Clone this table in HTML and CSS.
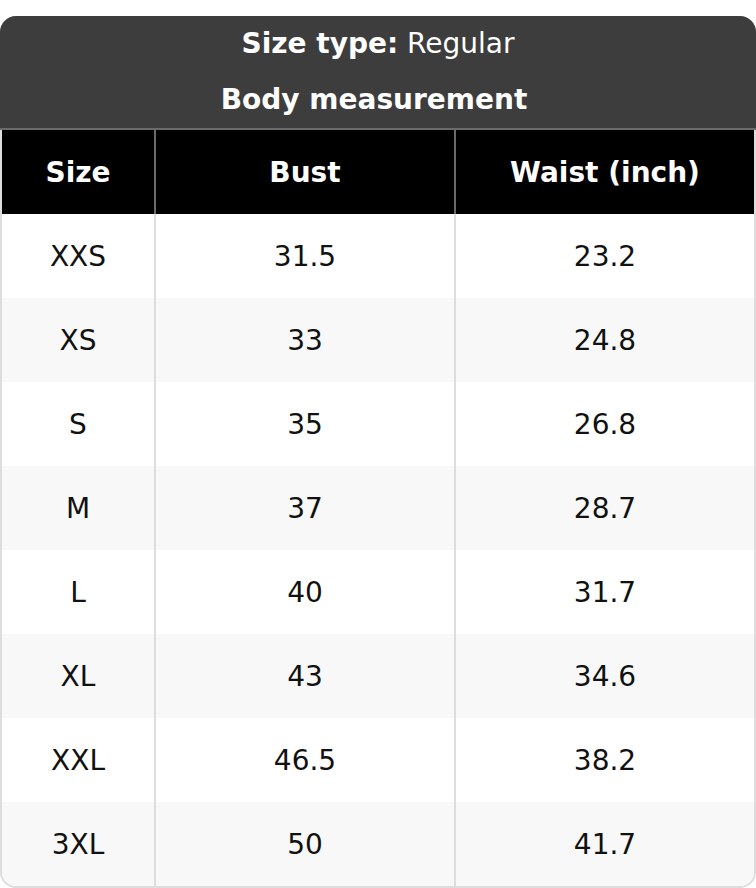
FILE: index.html
```html
<!DOCTYPE html>
<html>
<head>
<meta charset="utf-8">
<link rel="stylesheet" href="styles.css">
</head>
<body>
<div class="chart">
  <div class="head">
    <div class="head-line"><b>Size type:</b> Regular</div>
    <div class="head-line head-sub"><b>Body measurement</b></div>
  </div>
  <table class="grid">
    <thead>
      <tr><th class="c1">Size</th><th class="c2">Bust</th><th class="c3">Waist (inch)</th></tr>
    </thead>
    <tbody>
      <tr><td>XXS</td><td>31.5</td><td>23.2</td></tr>
      <tr><td>XS</td><td>33</td><td>24.8</td></tr>
      <tr><td>S</td><td>35</td><td>26.8</td></tr>
      <tr><td>M</td><td>37</td><td>28.7</td></tr>
      <tr><td>L</td><td>40</td><td>31.7</td></tr>
      <tr><td>XL</td><td>43</td><td>34.6</td></tr>
      <tr><td>XXL</td><td>46.5</td><td>38.2</td></tr>
      <tr><td>3XL</td><td>50</td><td>41.7</td></tr>
    </tbody>
  </table>
</div>
</body>
</html>
```
FILE: styles.css
```css
html, body {
  margin: 0;
  padding: 0;
  background: #ffffff;
}
body {
  font-family: "DejaVu Sans", "Liberation Sans", sans-serif;
  width: 756px;
}
.chart {
  margin-top: 16px;
  border-radius: 16px;
  overflow: hidden;
  background: #dddddd;
  padding: 0 2px 2px 2px;
}
.head {
  margin: 0 -2px;
  background: #3d3d3d;
  color: #ffffff;
  text-align: center;
  font-size: 28px;
  border-bottom: 2px solid #6a6a6a;
}
.head-line {
  height: 56px;
  line-height: 56px;
}
.head-sub {
  padding-right: 8px;
}
.grid {
  width: 100%;
  border-collapse: separate;
  border-spacing: 0;
  table-layout: fixed;
  background: #ffffff;
  border-radius: 0 0 14px 14px;
  overflow: hidden;
  font-size: 28px;
}
.grid th, .grid td {
  text-align: center;
  padding: 0;
  height: 84px;
}
.grid th {
  background: #000000;
  color: #ffffff;
  font-weight: bold;
  border-right: 2px solid #6a6a6a;
}
.grid td {
  color: #111111;
  border-right: 2px solid #dddddd;
}
.grid th:last-child, .grid td:last-child {
  border-right: 0;
}
.c1 { width: 152px; }
.c2 { width: 298px; }
.grid tbody tr:nth-child(even) td {
  background: #f8f8f8;
}
```
